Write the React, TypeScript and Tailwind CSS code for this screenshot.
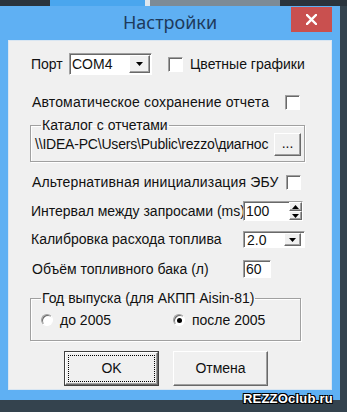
import React from "react";

const sunken =
  "bg-white border border-t-[#a0a0a0] border-l-[#a0a0a0] border-r-white border-b-white shadow-[inset_1px_1px_0_#696969]";
const raised =
  "bg-[#f0f0f0] border border-t-white border-l-white border-r-[#696969] border-b-[#696969] shadow-[inset_-1px_-1px_0_#a0a0a0]";

function Arrow({ up = false }: { up?: boolean }) {
  return (
    <svg width="7" height="4" viewBox="0 0 7 4">
      <path d={up ? "M0 4 L3.5 0 L7 4 Z" : "M0 0 L7 0 L3.5 4 Z"} fill="#000" />
    </svg>
  );
}

function Check() {
  return <span className={`block w-[15px] h-[15px] ${sunken}`} />;
}

function Radio({ on = false }: { on?: boolean }) {
  return (
    <span className="relative flex items-center justify-center w-[12px] h-[12px] rounded-full bg-white border border-t-[#a0a0a0] border-l-[#a0a0a0] border-r-white border-b-white shadow-[inset_1px_1px_0_#696969]">
      {on && <span className="w-[5px] h-[5px] rounded-full bg-black" />}
    </span>
  );
}

export default function App() {
  return (
    <div className="relative w-[347px] h-[412px] overflow-hidden bg-[#34434e] font-['Liberation_Sans',Arial,sans-serif] text-[14px] text-[#111]">
      {/* desktop strip above the window */}
      <div className="flex h-[6px]">
        <div className="w-[50px] bg-[#2a333c]" />
        <div className="w-[95px] bg-[#4aa6ee]" />
        <div className="w-[5px] bg-[#dde6ee]" />
        <div className="w-[130px] bg-[#7d8b96]" />
        <div className="flex-1 bg-[#2a333c]" />
      </div>

      {/* window */}
      <div className="w-[340px] h-[394px] bg-[#5fb0f3] flex flex-col">
        <div className="relative h-[34px] flex items-center justify-center">
          <span className="font-['Noto_Sans',sans-serif] text-[18px] text-[#1d3a5c] pb-[2px]">Настройки</span>
          <div className="absolute left-[291px] top-[1px] w-[41px] h-[25px] bg-[#c9504f] flex items-center justify-center">
            <svg width="11" height="11" viewBox="0 0 11 11">
              <path d="M1 1 L10 10 M10 1 L1 10" stroke="#fff" strokeWidth="2.4" strokeLinecap="square" />
            </svg>
          </div>
        </div>

        {/* client area */}
        <div className="ml-[8px] w-[324px] h-[350px] bg-[#f0f0f0] border border-[#d9e6f2] flex flex-col pt-[12px]">
          {/* port row */}
          <div className="flex items-center h-[22px] pl-[22px]">
            <span className="w-[38px]">Порт</span>
            <div className={`relative w-[83px] h-[22px] flex items-center ${sunken}`}>
              <span className="pl-[2px] leading-none">COM4</span>
              <div className={`absolute right-[1px] top-[1px] w-[21px] h-[18px] flex items-center justify-center ${raised}`}>
                <Arrow />
              </div>
            </div>
            <div className="ml-[16px]">
              <Check />
            </div>
            <span className="ml-[7px]">Цветные графики</span>
          </div>

          {/* autosave */}
          <div className="flex items-center h-[16px] mt-[19px] pl-[23px]">
            <span className="w-[253px] whitespace-nowrap tracking-[0.15px]">Автоматическое сохранение отчета</span>
            <Check />
          </div>

          {/* report folder */}
          <fieldset className="ml-[21px] w-[275px] mt-[7px] border border-[#a0a0a0] shadow-[1px_1px_0_#fff,inset_1px_1px_0_#fff] pl-[4px] pr-[3px] pb-[5px]">
            <legend className="ml-[6px] px-[1px] leading-[16px]">Каталог с отчетами</legend>
            <div className="flex items-center justify-between">
              <span className="whitespace-nowrap tracking-[-0.2px]">\\IDEA-PC\Users\Public\rezzo\диагнос</span>
              <div className={`w-[27px] h-[23px] flex items-center justify-center leading-none pb-[3px] ${raised}`}>...</div>
            </div>
          </fieldset>

          {/* alt init */}
          <div className="flex items-center h-[16px] mt-[12px] pl-[23px]">
            <span className="w-[254px] whitespace-nowrap tracking-[0.15px]">Альтернативная инициализация ЭБУ</span>
            <Check />
          </div>

          {/* interval */}
          <div className="flex items-center h-[20px] mt-[11px] pl-[22px]">
            <span className="w-[212px] whitespace-nowrap">Интервал между запросами (ms)</span>
            <div className={`w-[60px] h-[20px] flex items-center justify-between ${sunken}`}>
              <span className="pl-[2px] leading-none">100</span>
              <div className="flex flex-col w-[13px] h-[18px]">
                <div className={`flex-1 flex items-center justify-center ${raised}`}>
                  <Arrow up />
                </div>
                <div className={`flex-1 flex items-center justify-center ${raised}`}>
                  <Arrow />
                </div>
              </div>
            </div>
          </div>

          {/* calibration */}
          <div className="flex items-center h-[17px] mt-[10px] pl-[22px]">
            <span className="w-[212px] whitespace-nowrap">Калибровка расхода топлива</span>
            <div className={`relative w-[62px] h-[17px] flex items-center ${sunken}`}>
              <span className="pl-[3px] leading-none">2.0</span>
              <div className={`absolute right-[3px] top-[1px] w-[17px] h-[13px] flex items-center justify-center ${raised}`}>
                <Arrow />
              </div>
            </div>
          </div>

          {/* tank volume */}
          <div className="flex items-center h-[18px] mt-[12px] pl-[23px]">
            <span className="w-[211px] whitespace-nowrap">Объём топливного бака (л)</span>
            <div className={`w-[28px] h-[18px] flex items-center ${sunken}`}>
              <span className="pl-[2px] leading-none">60</span>
            </div>
          </div>

          {/* year group */}
          <fieldset className="ml-[21px] w-[271px] mt-[12px] border border-[#a0a0a0] shadow-[1px_1px_0_#fff,inset_1px_1px_0_#fff] pb-[12px]">
            <legend className="ml-[10px] px-[1px] leading-[16px]">Год выпуска (для АКПП Aisin-81)</legend>
            <div className="flex items-center h-[16px] mt-[6px] pl-[10px]">
              <Radio />
              <span className="ml-[7px] w-[113px]">до 2005</span>
              <Radio on />
              <span className="ml-[7px]">после 2005</span>
            </div>
          </fieldset>

          {/* buttons */}
          <div className="flex mt-[10px] pl-[55px] gap-[14px]">
            <div className="w-[95px] h-[35px] border border-[#404040]">
              <div className={`w-full h-full p-[2px] ${raised}`}>
                <div className="w-full h-full flex items-center justify-center border border-dotted border-black">OK</div>
              </div>
            </div>
            <div className={`w-[95px] h-[35px] flex items-center justify-center ${raised}`}>Отмена</div>
          </div>
        </div>
      </div>

      {/* site watermark */}
      <span className="absolute left-[243px] top-[389px] text-[13px] font-bold text-white tracking-[0.2px] [text-shadow:1px_1px_0_#000,-1px_-1px_0_#000,1px_-1px_0_#000,-1px_1px_0_#000]">
        REZZOclub.ru
      </span>
    </div>
  );
}
